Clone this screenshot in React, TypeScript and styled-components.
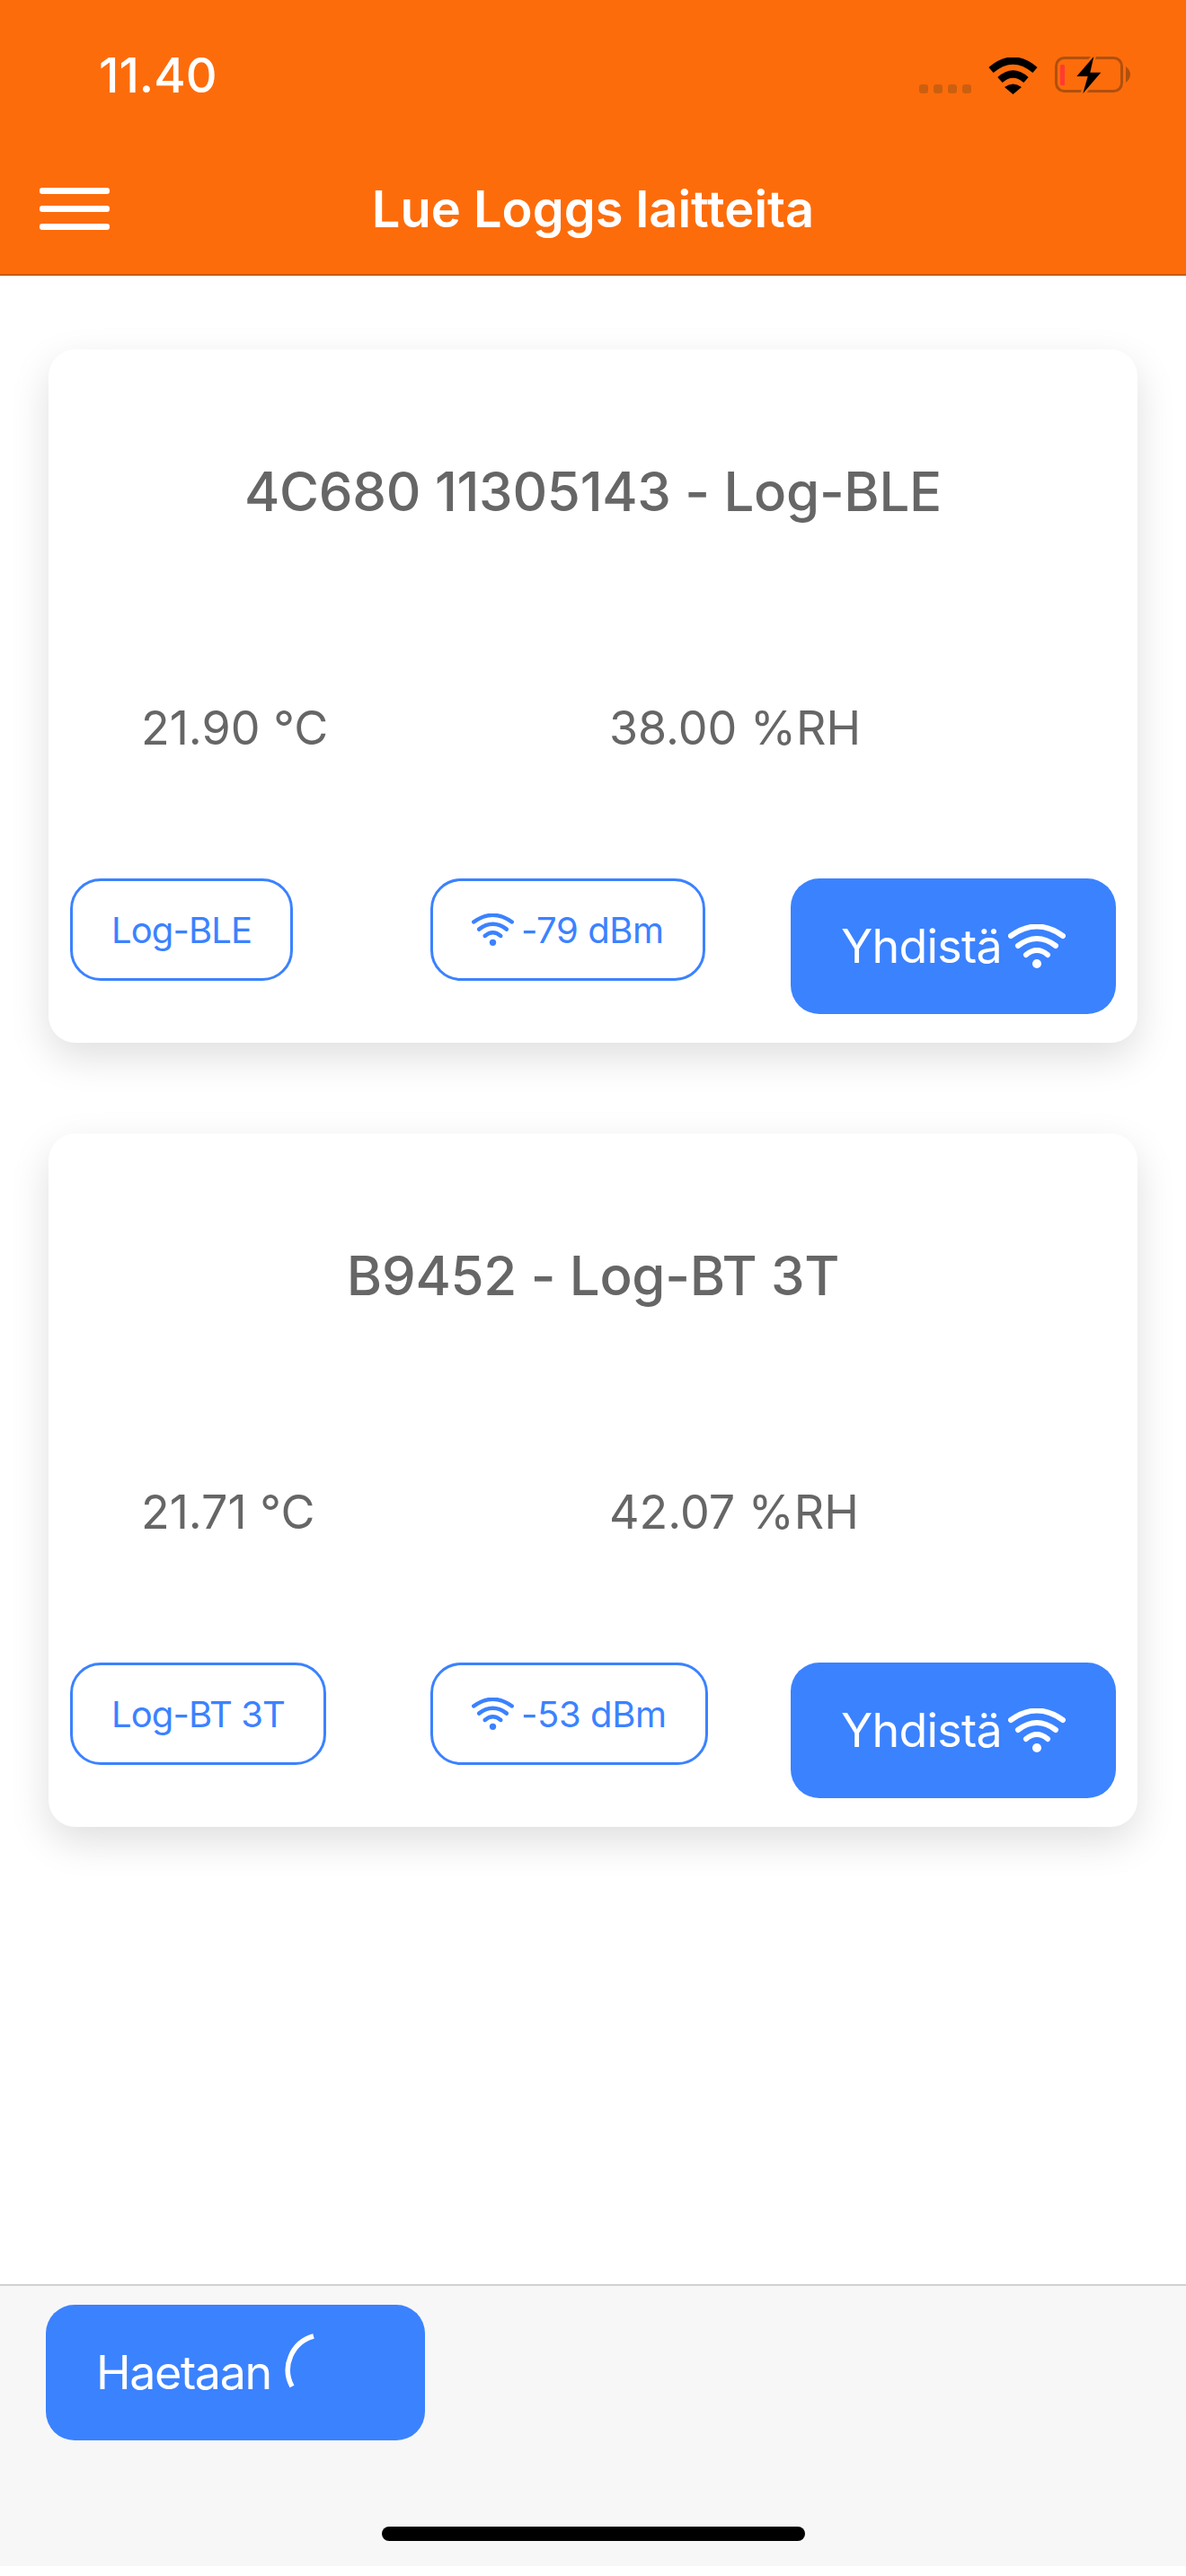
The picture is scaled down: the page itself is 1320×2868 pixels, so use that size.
import React from "react"
import styled, { createGlobalStyle } from "styled-components"

const BLUE = "#3b82ff"
const ORANGE = "#fd6c0b"
const GRAY = "#666666"

const GlobalStyle = createGlobalStyle`
  html, body {
    margin: 0;
    padding: 0;
    background: #ffffff;
  }
  body {
    font-family: Inter, "Liberation Sans", sans-serif;
  }
`

const Screen = styled.div`
  display: flex;
  flex-direction: column;
  width: 1320px;
  height: 2857px;
`

const Header = styled.header`
  background: ${ORANGE};
  border-bottom: 2px solid #c9590f;
  height: 305px;
`

const StatusBar = styled.div`
  display: flex;
  align-items: center;
  justify-content: space-between;
  height: 168px;
  padding: 0 62px 0 110px;
  box-sizing: border-box;
`

const Time = styled.span`
  color: #ffffff;
  font-size: 54px;
  font-weight: 500;
  line-height: 1;
`

const StatusIcons = styled.div`
  display: flex;
  align-items: flex-end;
`

const SignalDots = styled.div`
  display: flex;
  gap: 6px;
  margin: 0 19px 1px 0;
`

const SignalDot = styled.span`
  width: 10px;
  height: 10px;
  border-radius: 3px;
  background: #cb5f10;
`

const NavBar = styled.nav`
  display: grid;
  grid-template-columns: 1fr auto 1fr;
  align-items: center;
  padding: 0 44px 8px;
  height: 137px;
  box-sizing: border-box;
`

const MenuButton = styled.div`
  display: flex;
  flex-direction: column;
  gap: 13px;
  width: 78px;
`

const MenuLine = styled.span`
  height: 7px;
  border-radius: 3px;
  background: #ffffff;
`

const Title = styled.h1`
  margin: 0;
  color: #ffffff;
  font-size: 56px;
  font-weight: 600;
  line-height: 1;
`

const Content = styled.main`
  flex: 1;
  display: flex;
  flex-direction: column;
  gap: 101px;
  padding: 82px 54px 0;
`

const Card = styled.section`
  height: 772px;
  border-radius: 30px;
  background: #ffffff;
  box-shadow: 0 16px 44px rgba(0, 0, 0, 0.13);
`

const CardTitle = styled.h2`
  display: flex;
  align-items: center;
  justify-content: center;
  height: 316px;
  margin: 0;
  color: ${GRAY};
  font-size: 60px;
  font-weight: 500;
  letter-spacing: -0.3px;
`

const Readings = styled.div`
  display: grid;
  grid-template-columns: 521px 1fr;
  align-items: center;
  height: 210px;
  padding-left: 103px;
  color: ${GRAY};
  font-size: 52px;
`

const Actions = styled.div`
  display: grid;
  grid-template-columns: 401px 401px 362px;
  align-items: start;
  margin-top: 63px;
  padding-left: 24px;
`

const Tag = styled.div<{ $spacing: number }>`
  display: inline-flex;
  align-items: center;
  justify-self: start;
  gap: 8px;
  height: 114px;
  padding: 0 43px;
  box-sizing: border-box;
  border: 3px solid ${BLUE};
  border-radius: 34px;
  color: ${BLUE};
  font-size: 40px;
  letter-spacing: ${({ $spacing }) => $spacing}px;
`

const PrimaryButton = styled.button<{ $width: number; $align?: string }>`
  display: flex;
  align-items: center;
  justify-content: ${({ $align }) => $align ?? "center"};
  gap: 7px;
  width: ${({ $width }) => $width}px;
  height: 151px;
  padding: 0;
  border: none;
  border-radius: 32px;
  background: ${BLUE};
  color: #ffffff;
  font-family: inherit;
  font-size: 52px;
  letter-spacing: -0.8px;
`

const Footer = styled.footer`
  display: flex;
  flex-direction: column;
  height: 314px;
  padding: 21px 0 0 51px;
  box-sizing: border-box;
  border-top: 2px solid #d2d2d2;
  background: #f7f7f7;
`

const SearchLabel = styled.span`
  margin-left: 56px;
  letter-spacing: -1.4px;
`

const Spinner = styled.svg`
  margin: -20px 0 0 7px;
`

const HomeIndicator = styled.div`
  width: 471px;
  height: 16px;
  margin: 96px 0 0 374px;
  border-radius: 8px;
  background: #000000;
`

const WifiIcon: React.FC<{ size: number }> = ({ size }) => (
  <svg width={size} height={(size * 49) / 64} viewBox="0 0 64 49" fill="none">
    <g stroke="currentColor" strokeWidth="6" strokeLinecap="round">
      <path d="M3 13 Q32 -8 61 13" />
      <path d="M11 24 Q32 8 53 24" />
      <path d="M20 34 Q32 24 44 34" />
    </g>
    <circle cx="32" cy="44" r="5" fill="currentColor" />
  </svg>
)

const StatusWifi = () => (
  <svg width="55" height="41" viewBox="0 0 55 41" fill="none">
    <g stroke="#000000" strokeWidth="8">
      <path d="M3 14 Q27.5 -7 52 14" />
      <path d="M13 25 Q27.5 12 42 25" />
    </g>
    <path d="M18 33 Q27.5 26 37 33 L27.5 41 Z" fill="#000000" />
  </svg>
)

const StatusBattery = () => (
  <svg width="84" height="42" viewBox="0 0 84 42" fill="none" style={{ marginLeft: 19 }}>
    <rect x="1.5" y="1.5" width="73" height="37" rx="9" stroke="#b0500e" strokeWidth="3" />
    <path d="M79 11 Q84 15 84 20 Q84 25 79 29 Z" fill="#b0500e" />
    <rect x="6" y="9" width="5" height="23" rx="1.5" fill="#ff3b30" />
    <path
      d="M43.3 0 L24.3 22 L36.7 22 L31.3 41 L51.3 17.7 L39.3 17.7 Z"
      fill="#000000"
      stroke={ORANGE}
      strokeWidth="5"
      paintOrder="stroke"
      strokeLinejoin="round"
    />
  </svg>
)

type Device = {
  title: string
  temperature: string
  humidity: string
  model: string
  rssi: string
}

const DEVICES: Device[] = [
  {
    title: "4C680 11305143 - Log-BLE",
    temperature: "21.90 °C",
    humidity: "38.00 %RH",
    model: "Log-BLE",
    rssi: "-79 dBm",
  },
  {
    title: "B9452 - Log-BT 3T",
    temperature: "21.71 °C",
    humidity: "42.07 %RH",
    model: "Log-BT 3T",
    rssi: "-53 dBm",
  },
]

const DeviceCard: React.FC<{ device: Device }> = ({ device }) => (
  <Card>
    <CardTitle>{device.title}</CardTitle>
    <Readings>
      <span>{device.temperature}</span>
      <span>{device.humidity}</span>
    </Readings>
    <Actions>
      <Tag $spacing={-0.9}>{device.model}</Tag>
      <Tag $spacing={-0.4}>
        <WifiIcon size={47} />
        {device.rssi}
      </Tag>
      <PrimaryButton $width={362}>
        Yhdistä
        <WifiIcon size={64} />
      </PrimaryButton>
    </Actions>
  </Card>
)

const App: React.FC = () => (
  <>
    <GlobalStyle />
    <Screen>
      <Header>
        <StatusBar>
          <Time>11.40</Time>
          <StatusIcons>
            <SignalDots>
              <SignalDot />
              <SignalDot />
              <SignalDot />
              <SignalDot />
            </SignalDots>
            <StatusWifi />
            <StatusBattery />
          </StatusIcons>
        </StatusBar>
        <NavBar>
          <MenuButton>
            <MenuLine />
            <MenuLine />
            <MenuLine />
          </MenuButton>
          <Title>Lue Loggs laitteita</Title>
        </NavBar>
      </Header>
      <Content>
        {DEVICES.map((device) => (
          <DeviceCard key={device.title} device={device} />
        ))}
      </Content>
      <Footer>
        <PrimaryButton $width={422} $align="flex-start">
          <SearchLabel>Haetaan</SearchLabel>
          <Spinner width="44" height="68" viewBox="0 0 44 68" fill="none">
            <path d="M33 3 A39 39 0 0 0 9 59" stroke="#ffffff" strokeWidth="5.5" />
          </Spinner>
        </PrimaryButton>
        <HomeIndicator />
      </Footer>
    </Screen>
  </>
)

export default App
